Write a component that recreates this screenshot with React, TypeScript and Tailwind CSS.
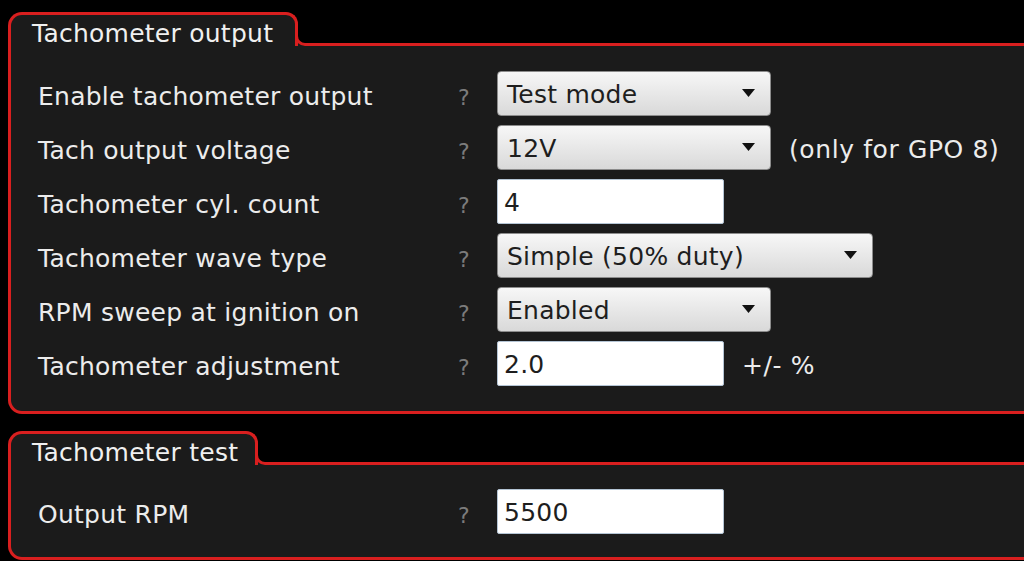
import React from "react";

type Row = {
  label: string;
  kind: "select" | "input";
  value: string;
  width: string;
  suffix?: string;
};

const outputRows: Row[] = [
  { label: "Enable tachometer output", kind: "select", value: "Test mode", width: "w-[274px]" },
  { label: "Tach output voltage", kind: "select", value: "12V", width: "w-[274px]", suffix: "(only for GPO 8)" },
  { label: "Tachometer cyl. count", kind: "input", value: "4", width: "w-[227px]" },
  { label: "Tachometer wave type", kind: "select", value: "Simple (50% duty)", width: "w-[376px]" },
  { label: "RPM sweep at ignition on", kind: "select", value: "Enabled", width: "w-[274px]" },
  { label: "Tachometer adjustment", kind: "input", value: "2.0", width: "w-[227px]", suffix: "+/- %" },
];

const testRows: Row[] = [
  { label: "Output RPM", kind: "input", value: "5500", width: "w-[227px]" },
];

function SelectBox({ value, width }: { value: string; width: string }) {
  return (
    <div
      className={`${width} h-[45px] flex items-center justify-between pl-[9px] pr-[15px] rounded-[4px] border border-[#8c8c8c] bg-gradient-to-b from-[#f7f7f7] to-[#d9d9d9] text-[#1e1e1e]`}
    >
      <span className="pt-[4px]">{value}</span>
      <svg width="13" height="8" viewBox="0 0 13 8">
        <path d="M0 0 H13 L6.5 8 Z" fill="#111" />
      </svg>
    </div>
  );
}

function InputBox({ value, width }: { value: string; width: string }) {
  return (
    <div
      className={`${width} h-[45px] flex items-center pl-[6px] pt-[3px] rounded-[2px] border border-[#b4c4d4] bg-white text-[#1e1e1e]`}
    >
      {value}
    </div>
  );
}

function FormRow({ row }: { row: Row }) {
  return (
    <div className="h-[54px] flex items-center">
      <div className="w-[420px] text-[#ececec] pt-[8px]">{row.label}</div>
      <div className="w-[39px] text-[22px] text-[#7c7c7c] pt-[8px]">?</div>
      {row.kind === "select" ? (
        <SelectBox value={row.value} width={row.width} />
      ) : (
        <InputBox value={row.value} width={row.width} />
      )}
      {row.suffix && (
        <span className="ml-[18px] text-[#ececec] pt-[6px] tracking-[0.6px]">{row.suffix}</span>
      )}
    </div>
  );
}

function Panel({
  title,
  tabWidth,
  rows,
  bodyClass,
}: {
  title: string;
  tabWidth: string;
  rows: Row[];
  bodyClass: string;
}) {
  return (
    <div className="w-[1050px]">
      {/* tab + line across */}
      <div className="flex items-end h-[34px]">
        <div
          className={`${tabWidth} h-[34px] bg-[#1b1b1b] border-l-[3px] border-t-[3px] border-r-[3px] border-[#d91f1f] rounded-tl-[14px] rounded-tr-[12px] pl-[21px] pt-[5px] text-[#f0f0f0] leading-[28px]`}
        >
          {title}
        </div>
        <div className="flex-1 -ml-[3px] h-[20px] border-l-[3px] border-b-[3px] border-[#d91f1f] rounded-bl-[10px]" />
      </div>
      <div
        className={`bg-[#1b1b1b] border-l-[3px] border-r-[3px] border-b-[3px] border-[#d91f1f] rounded-b-[14px] pl-[27px] -mt-[3px] ${bodyClass}`}
      >
        {rows.map((r) => (
          <FormRow key={r.label} row={r} />
        ))}
      </div>
    </div>
  );
}

export default function App() {
  return (
    <div
      className="w-[1024px] h-[561px] overflow-hidden bg-black pt-[12px] pl-[8px] text-[25px] tracking-[0.25px]"
      style={{ fontFamily: '"DejaVu Sans", Verdana, sans-serif' }}
    >
      <Panel
        title="Tachometer output"
        tabWidth="w-[290px]"
        rows={outputRows}
        bodyClass="pt-[23px] pb-[21px]"
      />
      <div className="h-[17px]" />
      <Panel
        title="Tachometer test"
        tabWidth="w-[250px]"
        rows={testRows}
        bodyClass="pt-[22px] pb-[19px]"
      />
    </div>
  );
}
